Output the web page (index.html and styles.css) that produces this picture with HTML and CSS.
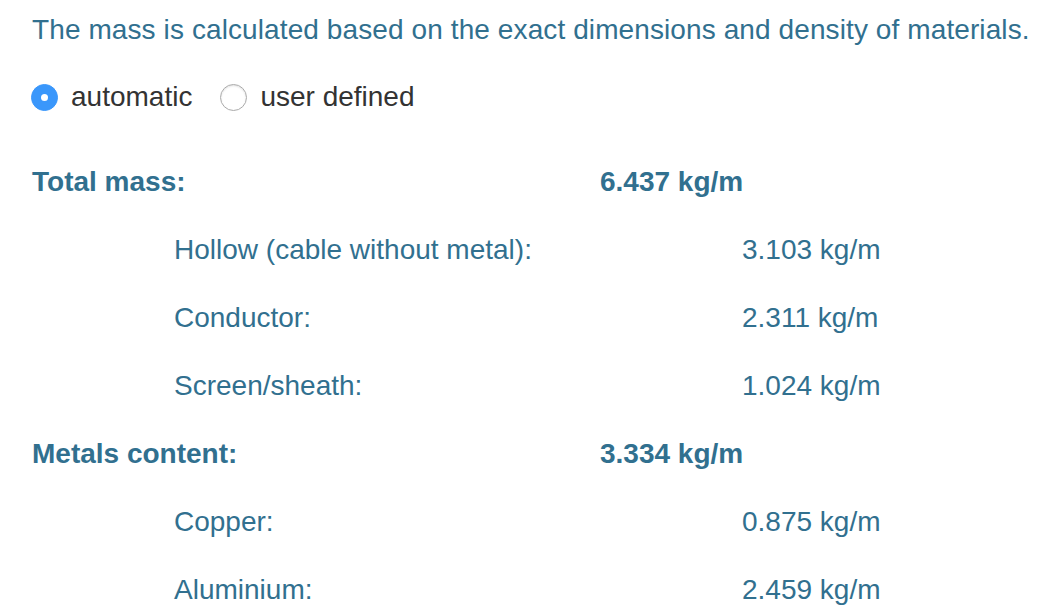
FILE: index.html
```html
<!DOCTYPE html>
<html>
<head>
<meta charset="utf-8">
<link rel="stylesheet" href="styles.css">
</head>
<body>
<div class="panel">
  <p class="intro">The mass is calculated based on the exact dimensions and density of materials.</p>
  <div class="radios">
    <label class="radio"><span class="dot checked"></span>automatic</label>
    <label class="radio"><span class="dot"></span>user defined</label>
  </div>
  <div class="table">
    <div class="row head"><span class="label">Total mass:</span><span class="value">6.437 kg/m</span></div>
    <div class="row sub"><span class="label">Hollow (cable without metal):</span><span class="value">3.103 kg/m</span></div>
    <div class="row sub"><span class="label">Conductor:</span><span class="value">2.311 kg/m</span></div>
    <div class="row sub"><span class="label">Screen/sheath:</span><span class="value">1.024 kg/m</span></div>
    <div class="row head"><span class="label">Metals content:</span><span class="value">3.334 kg/m</span></div>
    <div class="row sub"><span class="label">Copper:</span><span class="value">0.875 kg/m</span></div>
    <div class="row sub"><span class="label">Aluminium:</span><span class="value">2.459 kg/m</span></div>
  </div>
</div>
</body>
</html>
```
FILE: styles.css
```css
html, body {
  margin: 0;
  padding: 0;
  background: #fff;
}
body {
  font-family: "Liberation Sans", Arial, sans-serif;
  font-size: 28px;
  color: #31708f;
}
.panel {
  padding: 10px 0 0 32px;
}
.intro {
  margin: 0;
  line-height: 40px;
  letter-spacing: 0.1px;
}
.radios {
  display: flex;
  align-items: center;
  gap: 29px;
  margin-top: 27px;
  height: 40px;
  color: #333;
}
.radio {
  display: flex;
  align-items: center;
  gap: 13px;
}
.dot {
  width: 27px;
  height: 27px;
  margin-left: -1px;
  border-radius: 50%;
  border: 1px solid #aaa;
  box-shadow: inset 0 1px 2px rgba(0, 0, 0, 0.12);
  box-sizing: border-box;
  background: #fff;
  display: inline-block;
  position: relative;
}
.dot.checked {
  border-color: #3a97fb;
  background: #3a97fb;
  box-shadow: none;
}
.dot.checked::after {
  content: "";
  position: absolute;
  left: 9px;
  top: 9px;
  width: 7px;
  height: 7px;
  border-radius: 50%;
  background: #fff;
}
.table {
  margin-top: 31px;
}
.row {
  display: grid;
  grid-template-columns: 568px 1fr;
  height: 68px;
  align-items: center;
}
.row.head {
  font-weight: bold;
}
.row.sub {
  padding-left: 142px;
}
```
